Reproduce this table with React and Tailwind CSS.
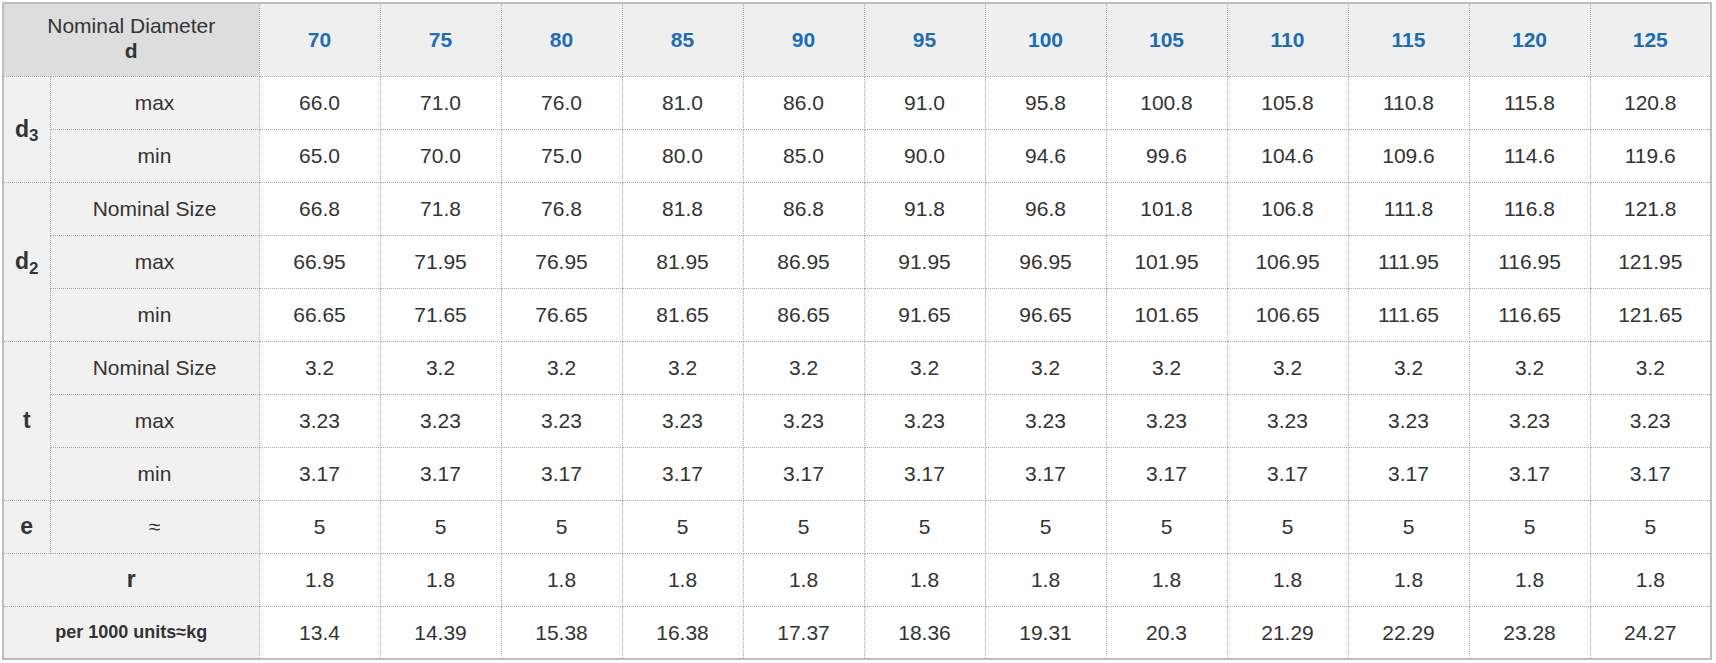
import React from "react";

const sizes = [70, 75, 80, 85, 90, 95, 100, 105, 110, 115, 120, 125];

// each group: label + rows of [sub-label, values]
const groups = [
  {
    label: "d",
    sub: "3",
    rows: [
      ["max", ["66.0", "71.0", "76.0", "81.0", "86.0", "91.0", "95.8", "100.8", "105.8", "110.8", "115.8", "120.8"]],
      ["min", ["65.0", "70.0", "75.0", "80.0", "85.0", "90.0", "94.6", "99.6", "104.6", "109.6", "114.6", "119.6"]],
    ],
  },
  {
    label: "d",
    sub: "2",
    rows: [
      ["Nominal Size", ["66.8", "71.8", "76.8", "81.8", "86.8", "91.8", "96.8", "101.8", "106.8", "111.8", "116.8", "121.8"]],
      ["max", ["66.95", "71.95", "76.95", "81.95", "86.95", "91.95", "96.95", "101.95", "106.95", "111.95", "116.95", "121.95"]],
      ["min", ["66.65", "71.65", "76.65", "81.65", "86.65", "91.65", "96.65", "101.65", "106.65", "111.65", "116.65", "121.65"]],
    ],
  },
  {
    label: "t",
    rows: [
      ["Nominal Size", Array(12).fill("3.2")],
      ["max", Array(12).fill("3.23")],
      ["min", Array(12).fill("3.17")],
    ],
  },
  {
    label: "e",
    rows: [["≈", Array(12).fill("5")]],
  },
];

const rVals = Array(12).fill("1.8");
const weights = ["13.4", "14.39", "15.38", "16.38", "17.37", "18.36", "19.31", "20.3", "21.29", "22.29", "23.28", "24.27"];

const cell = "border border-dotted border-[#a8a8a8] text-center align-middle p-0";
const label = `${cell} bg-[#f1f1f1]`;
const data = `${cell} bg-white`;

export default function App() {
  return (
    <div
      className="p-[2px] bg-white text-[#333] text-[21px]"
      style={{ fontFamily: '"Liberation Sans", Arial, sans-serif' }}
    >
      <table className="w-[1708px] table-fixed border-collapse border-2 border-solid border-[#bdbdbd]">
        <colgroup>
          <col className="w-[47px]" />
          <col className="w-[209px]" />
          {sizes.map((s) => (
            <col key={s} className="w-[121px]" />
          ))}
        </colgroup>
        <thead>
          <tr className="h-[73px]">
            <th colSpan={2} className={`${cell} bg-[#dddddd] font-normal leading-[25px] pb-[3px]`}>
              Nominal Diameter
              <br />
              <b>d</b>
            </th>
            {sizes.map((s) => (
              <th key={s} className={`${cell} bg-[#efefef] font-bold text-[#1c6db5]`}>
                {s}
              </th>
            ))}
          </tr>
        </thead>
        <tbody>
          {groups.map((g, gi) =>
            g.rows.map(([sub, vals], ri) => (
              <tr key={`${gi}-${ri}`} className="h-[53px]">
                {ri === 0 && (
                  <td rowSpan={g.rows.length} className={`${label} font-bold text-[23px]`}>
                    {g.label}
                    {g.sub && <sub className="text-[17px]">{g.sub}</sub>}
                  </td>
                )}
                <td className={label}>{sub}</td>
                {vals.map((v, i) => (
                  <td key={i} className={data}>
                    {v}
                  </td>
                ))}
              </tr>
            ))
          )}
          <tr className="h-[53px]">
            <td colSpan={2} className={`${label} font-bold text-[23px]`}>
              r
            </td>
            {rVals.map((v, i) => (
              <td key={i} className={data}>
                {v}
              </td>
            ))}
          </tr>
          <tr className="h-[53px]">
            <td colSpan={2} className={`${label} font-bold text-[18px]`}>
              per 1000 units≈kg
            </td>
            {weights.map((v, i) => (
              <td key={i} className={data}>
                {v}
              </td>
            ))}
          </tr>
        </tbody>
      </table>
    </div>
  );
}
